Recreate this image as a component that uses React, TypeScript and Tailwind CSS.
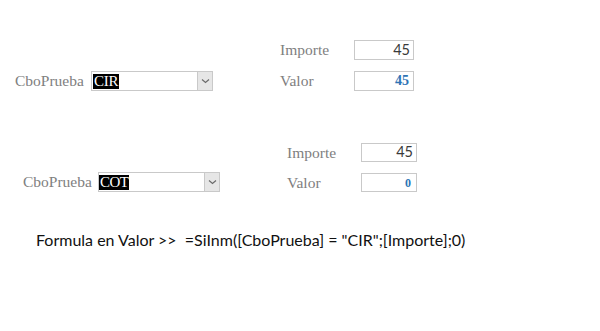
import React from "react";

const serif = { fontFamily: '"Liberation Serif", "Times New Roman", serif' };

function Chevron() {
  return (
    <svg width="9" height="6" viewBox="0 0 9 6" fill="none">
      <path d="M1 1.5 L4.5 4.5 L8 1.5" stroke="#6b6b6b" strokeWidth="1.2" />
    </svg>
  );
}

export default function App() {
  return (
    <div className="w-[600px] h-[331px] bg-white overflow-hidden" style={serif}>
      {/* group 1 */}
      <div className="flex items-end pt-[40px]">
        <div className="flex items-center w-[280px] pl-[15px]">
          <span className="w-[76px] text-[15.5px] text-[#808080] leading-none">CboPrueba</span>
          <div className="flex items-center w-[122px] h-[20px] border border-[#c9c9c9] bg-white">
            <div className="flex-1 flex items-center pl-[1px]">
              <span className="bg-black text-white text-[15px] leading-[15px] px-[1px] tracking-[-0.3px]">CIR</span>
            </div>
            <div className="w-[15px] h-[18px] bg-[#e6e6e6] border-l border-[#c9c9c9] flex items-center justify-center">
              <Chevron />
            </div>
          </div>
        </div>
        <div className="flex flex-col gap-[11px]">
          <div className="flex items-center">
            <span className="w-[74px] text-[15.5px] text-[#808080] leading-none">Importe</span>
            <div className="w-[60px] h-[20px] border border-[#c9c9c9] flex items-center justify-end pr-[3px]">
              <span className="text-[14.5px] text-[#3a3a3a] leading-none" style={{ fontFamily: 'Lato, sans-serif' }}>45</span>
            </div>
          </div>
          <div className="flex items-center">
            <span className="w-[74px] text-[15.5px] text-[#808080] leading-none">Valor</span>
            <div className="w-[60px] h-[20px] border border-[#c9c9c9] flex items-center justify-end pr-[4px]">
              <span className="text-[14px] font-bold text-[#2e74b5] leading-none">45</span>
            </div>
          </div>
        </div>
      </div>

      {/* group 2 */}
      <div className="flex items-end mt-[52px]">
        <div className="flex items-center w-[287px] pl-[23px]">
          <span className="w-[75px] text-[15.5px] text-[#808080] leading-none">CboPrueba</span>
          <div className="flex items-center w-[122px] h-[20px] border border-[#c9c9c9] bg-white">
            <div className="flex-1 flex items-center">
              <span className="bg-black text-white text-[15px] leading-[15px] px-[1px] tracking-[-0.6px]">COT</span>
            </div>
            <div className="w-[15px] h-[18px] bg-[#e6e6e6] border-l border-[#c9c9c9] flex items-center justify-center">
              <Chevron />
            </div>
          </div>
        </div>
        <div className="flex flex-col gap-[11px]">
          <div className="flex items-center">
            <span className="w-[74px] text-[15.5px] text-[#808080] leading-none">Importe</span>
            <div className="w-[56px] h-[19px] border border-[#c9c9c9] flex items-center justify-end pr-[3px]">
              <span className="text-[14.5px] text-[#3a3a3a] leading-none" style={{ fontFamily: 'Lato, sans-serif' }}>45</span>
            </div>
          </div>
          <div className="flex items-center">
            <span className="w-[74px] text-[15.5px] text-[#808080] leading-none">Valor</span>
            <div className="w-[56px] h-[19px] border border-[#c9c9c9] flex items-center justify-end pr-[5px]">
              <span className="text-[12px] font-bold text-[#2e74b5] leading-none">0</span>
            </div>
          </div>
        </div>
      </div>

      {/* formula */}
      <div className="pl-[36px] mt-[37px]">
        <span
          className="whitespace-pre text-[16px] text-[#111] leading-none"
          style={{ fontFamily: 'Lato, sans-serif' }}
        >
          {'Formula en Valor >>  =SiInm([CboPrueba] = "CIR";[Importe];0)'}
        </span>
      </div>
    </div>
  );
}
